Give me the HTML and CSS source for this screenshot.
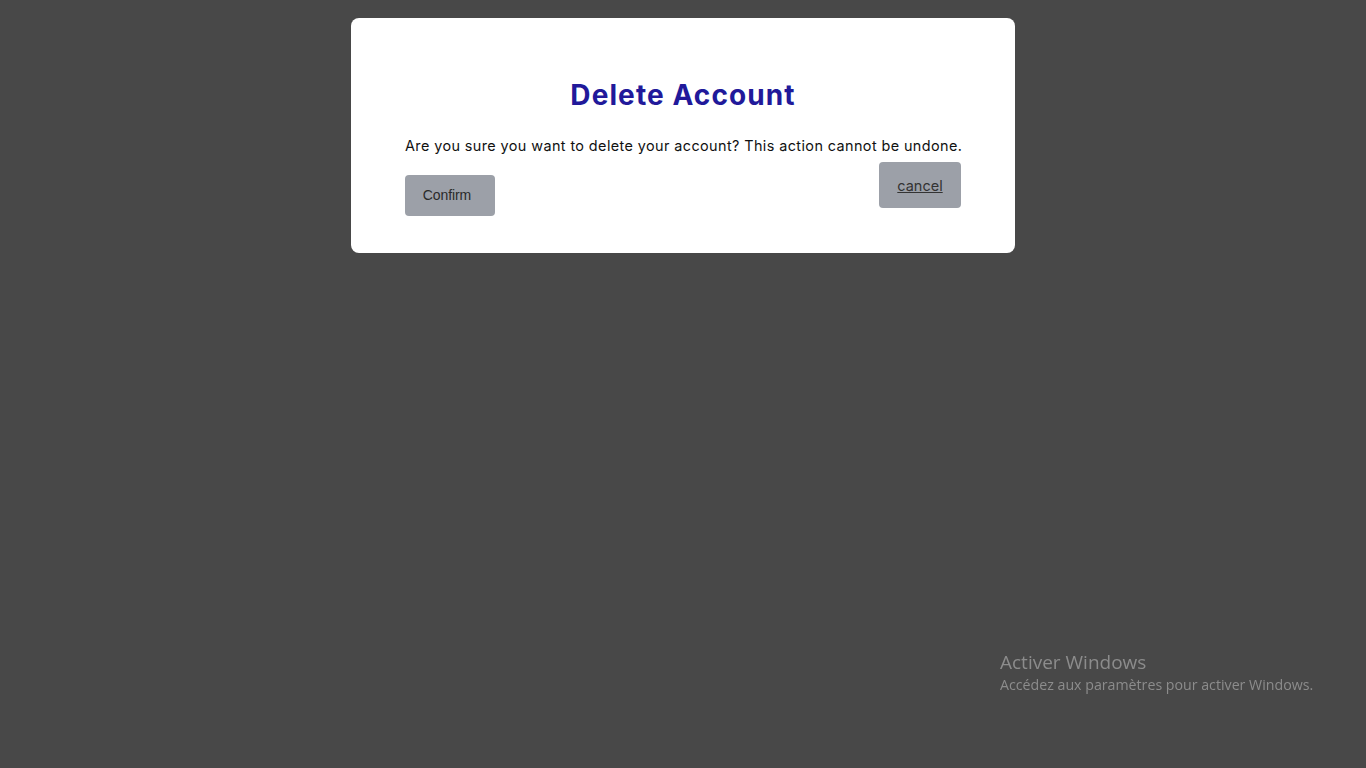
FILE: index.html
```html
<!DOCTYPE html>
<html lang="en">
<head>
<meta charset="utf-8">
<title>Delete Account</title>
<link rel="stylesheet" href="styles.css">
</head>
<body>
<main class="page">
  <section class="modal">
    <h1 class="modal-title">Delete Account</h1>
    <p class="modal-text">Are you sure you want to delete your account? This action cannot be undone.</p>
    <div class="modal-actions">
      <button class="btn btn-confirm" type="button">Confirm</button>
      <a class="btn btn-cancel" href="#">cancel</a>
    </div>
  </section>
</main>
<div class="watermark">
  <div class="wm-title">Activer Windows</div>
  <div class="wm-sub">Accédez aux paramètres pour activer Windows.</div>
</div>
</body>
</html>
```

FILE: styles.css
```css
* { box-sizing: border-box; }
html, body { margin: 0; padding: 0; height: 100%; }
body {
  background: #484848;
  font-family: "Inter", "Noto Sans", sans-serif;
  overflow: hidden;
}
.page {
  display: flex;
  justify-content: center;
  padding-top: 18px;
}
.modal {
  width: 664px;
  background: #ffffff;
  border-radius: 8px;
  padding: 56px 54px 37px 54px;
  display: flex;
  flex-direction: column;
}
.modal-title {
  margin: 0;
  text-align: center;
  font-size: 28px;
  line-height: 42px;
  font-weight: 700;
  color: #21199a;
  letter-spacing: 1.1px;
}
.modal-text {
  margin: 19px 0 0 0;
  font-size: 14.4px;
  line-height: 22px;
  color: #111;
  letter-spacing: 0.41px;
  white-space: nowrap;
}
.modal-actions {
  display: flex;
  justify-content: space-between;
  align-items: flex-start;
  margin-top: 5px;
}
.btn {
  border: none;
  border-radius: 4px;
  background: #9ca0a8;
  color: #2a2a2a;
  display: inline-flex;
  align-items: center;
  justify-content: center;
}
.btn-confirm {
  margin-top: 13px;
  width: 90px;
  height: 41px;
  font-family: "Liberation Sans", Arial, sans-serif;
  font-size: 14px;
  letter-spacing: -0.1px;
  padding: 0 6px 2px 0;
}
.btn-cancel {
  width: 82px;
  height: 46px;
  font-size: 14.5px;
  color: #333;
  text-decoration: underline;
}
.watermark {
  position: fixed;
  left: 1000px;
  top: 650px;
  color: #8c8c8c;
  font-family: "Open Sans", "Noto Sans", sans-serif;
}
.wm-title { font-size: 19px; line-height: 24px; }
.wm-sub { font-size: 14.2px; line-height: 20px; margin-top: 1px; }
```
